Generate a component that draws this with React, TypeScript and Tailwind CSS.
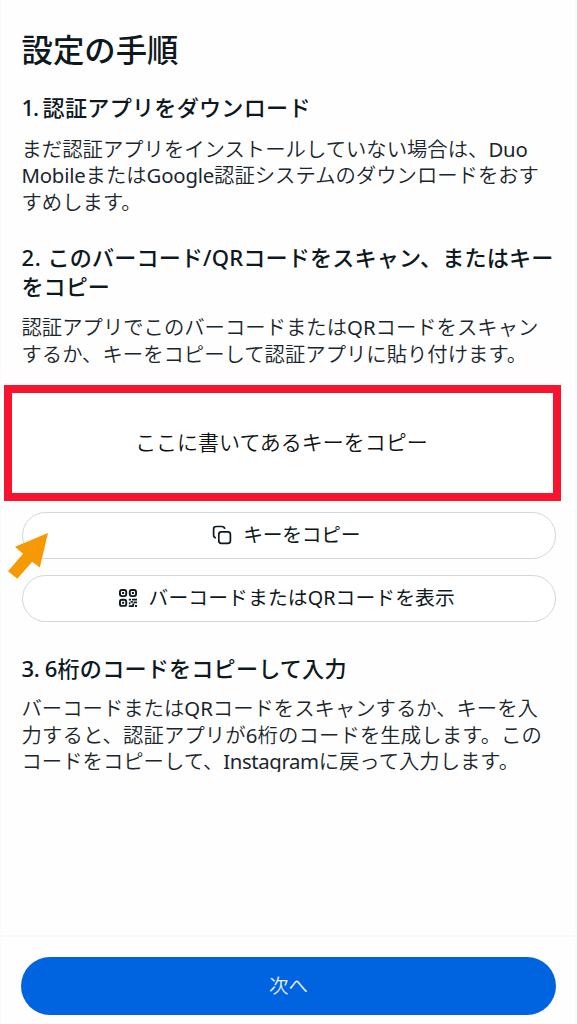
import React from "react";

type LineProps = { className?: string; children: React.ReactNode };

function Line({ className = "", children }: LineProps) {
  return <span className={`block w-max whitespace-pre ${className}`}>{children}</span>;
}

function Latin({ className = "tracking-[-0.4px]", children }: LineProps) {
  return <span className={`font-normal ${className}`}>{children}</span>;
}

function CopyIcon() {
  return (
    <svg className="h-[20px] w-[20px] shrink-0" viewBox="0 0 20 20" fill="none" stroke="currentColor" strokeWidth="1.7">
      <rect x="6.8" y="6.8" width="11.6" height="11.6" rx="2.6" />
      <path d="M3.9 12.8C2.3 12.5 1.6 11.7 1.6 10.2V4.2C1.6 2.4 2.5 1.5 4.3 1.5H9.8C11.6 1.5 12.5 2.2 12.8 3.8" />
    </svg>
  );
}

function QrIcon() {
  return (
    <svg className="h-[20px] w-[20px] shrink-0" viewBox="0 0 20 20" fill="none" stroke="currentColor">
      <g strokeWidth="1.9">
        <rect x="1.95" y="2" width="6.3" height="6.1" rx="2" />
        <rect x="11.75" y="2" width="6.3" height="6.1" rx="2" />
        <rect x="1.95" y="11.8" width="6.3" height="6.1" rx="2" />
      </g>
      <g fill="currentColor" stroke="none">
        <rect x="4.1" y="4" width="2" height="2" />
        <rect x="13.9" y="4" width="2" height="2" />
        <rect x="4.1" y="13.8" width="2" height="2" />
        <path d="M10.8 10.8h2.2v1.8h-2.2zM14 10.8h5v1.8h-5zM12.6 13h2.2v1.8h-2.2zM10.8 14.6h1.6v1.6h-1.6zM15.6 13.6h3.4v1.6h-3.4zM10.8 17.2h5v1.8h-5zM14.2 15.4h2v2.2h-2zM17 17h2v2h-2z" />
      </g>
    </svg>
  );
}

const heading = "text-[22.1px] leading-[28.5px] font-medium text-[#0e191e]";
const body = "text-[20.35px] font-[350] text-[#1a262c]";
const pill =
  "flex h-[47px] w-full items-center justify-center rounded-full border-[1.5px] border-[#d0d7df] bg-white pr-[5px] text-[19.8px] text-[#0e191e]";

export default function App() {
  return (
    <div className="relative flex h-[1024px] w-[577px] flex-col overflow-hidden border-r-2 border-l border-[#f9fafb] bg-[#fefefe] font-['Noto_Sans','Noto_Sans_CJK_JP',sans-serif]">
      <main className="flex flex-1 flex-col pt-[30px] pr-[19px] pl-[20.5px]">
        <h1 className="text-[31.4px] leading-[40px] font-medium text-[#0e191e]">
          <Line>設定の手順</Line>
        </h1>

        <section className="mt-[23px]">
          <h2 className={heading}>
            <Line className="tracking-[0.25px]"><span className="tracking-[-1.1px]">1. </span>認証アプリをダウンロード</Line>
          </h2>
          <p className={`mt-[14px] leading-[26.6px] ${body}`}>
            <Line>まだ認証アプリをインストールしていない場合は、<Latin className="tracking-[-0.2px]">Duo</Latin></Line>
            <Line><Latin className="tracking-[-0.2px]">Mobile</Latin>または<Latin className="tracking-[-0.2px]">Google</Latin>認証システムのダウンロードをおす</Line>
            <Line>すめします。</Line>
          </p>
        </section>

        <section className="mt-[28.2px]">
          <h2 className={heading}>
            <Line className="tracking-[0.15px]"><span className="tracking-[0.5px]">2. </span>このバーコード/QRコードをスキャン、またはキー</Line>
            <Line>をコピー</Line>
          </h2>
          <p className={`mt-[14px] leading-[26.6px] ${body}`}>
            <Line>認証アプリでこのバーコードまたは<Latin className="">QR</Latin>コードをスキャン</Line>
            <Line>するか、キーをコピーして認証アプリに貼り付けます。</Line>
          </p>
        </section>

        <div className="mt-[17px] -ml-[17.5px] flex h-[116px] w-[557px] shrink-0 items-center justify-center border-[8px] border-[#f8132f] bg-white pr-[2px] text-[21px] font-[350] text-[#111]">
          <Line>ここに書いてあるキーをコピー</Line>
        </div>

        <div className="relative mt-[11px] flex flex-col gap-[16px]">
          <button className={pill}>
            <CopyIcon />
            <Line className="ml-[11px] tracking-[-0.3px]">キーをコピー</Line>
          </button>
          <button className={pill}>
            <QrIcon />
            <Line className="ml-[11px] tracking-[0.1px]">バーコードまたはQRコードを表示</Line>
          </button>
          <svg className="absolute top-[20px] -left-[14.5px] h-[48px] w-[42px]" viewBox="0 0 42 48" fill="#f59a05">
            <path d="M41 1L32.8 35.5L25.2 29.8L10.3 46.8L1 39.2L16 21.7L8 14.8Z" />
          </svg>
        </div>

        <section className="mt-[32px]">
          <h2 className={heading}>
            <Line className="tracking-[0.2px]"><span className="tracking-[-0.4px]">3. </span>6桁のコードをコピーして入力</Line>
          </h2>
          <p className={`mt-[13px] h-[76.5px] overflow-hidden leading-[26.6px] ${body}`}>
            <Line>バーコードまたは<Latin className="">QR</Latin>コードをスキャンするか、キーを入</Line>
            <Line className="tracking-[0.12px]">力すると、認証アプリが<Latin className="">6</Latin>桁のコードを生成します。この</Line>
            <Line>コードをコピーして、<Latin>Instagram</Latin>に戻って入力します。</Line>
          </p>
        </section>
      </main>

      <footer className="h-[89px] shrink-0 border-t-2 border-[#f7f8f9] pt-[20px] pr-[19px] pl-[20px]">
        <button className="flex h-[58px] w-full items-center justify-center rounded-full bg-[#0064e0] text-[19.5px] font-[350] text-[#e8f1fc]">
          次へ
        </button>
      </footer>
    </div>
  );
}
